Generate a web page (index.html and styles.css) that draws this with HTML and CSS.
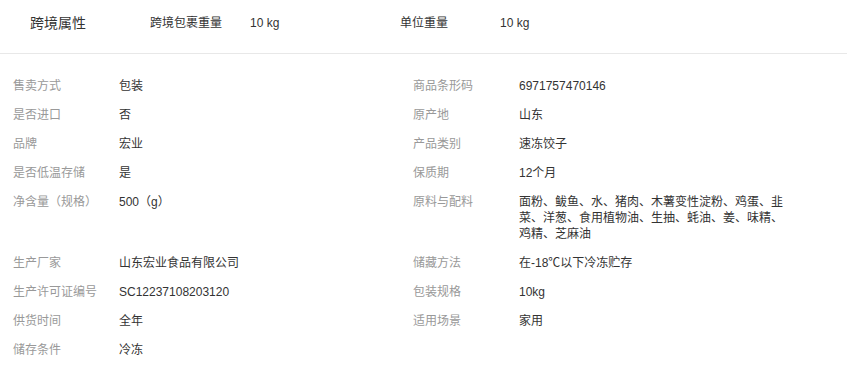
FILE: index.html
```html
<!DOCTYPE html>
<html lang="zh-CN">
<head>
<meta charset="utf-8">
<link rel="stylesheet" href="styles.css">
</head>
<body>
<div class="header">
  <div class="header-title">跨境属性</div>
  <div class="header-item"><span class="h-label">跨境包裹重量</span><span class="h-value">10 kg</span></div>
  <div class="header-item"><span class="h-label">单位重量</span><span class="h-value">10 kg</span></div>
</div>
<div class="attrs">
  <div class="attr"><span class="label">售卖方式</span><span class="value">包装</span></div>
  <div class="attr"><span class="label">商品条形码</span><span class="value">6971757470146</span></div>
  <div class="attr"><span class="label">是否进口</span><span class="value">否</span></div>
  <div class="attr"><span class="label">原产地</span><span class="value">山东</span></div>
  <div class="attr"><span class="label">品牌</span><span class="value">宏业</span></div>
  <div class="attr"><span class="label">产品类别</span><span class="value">速冻饺子</span></div>
  <div class="attr"><span class="label">是否低温存储</span><span class="value">是</span></div>
  <div class="attr"><span class="label">保质期</span><span class="value">12个月</span></div>
  <div class="attr"><span class="label">净含量（规格）</span><span class="value">500（g）</span></div>
  <div class="attr"><span class="label">原料与配料</span><span class="value">面粉、鲅鱼、水、猪肉、木薯变性淀粉、鸡蛋、韭菜、洋葱、食用植物油、生抽、蚝油、姜、味精、鸡精、芝麻油</span></div>
  <div class="attr"><span class="label">生产厂家</span><span class="value">山东宏业食品有限公司</span></div>
  <div class="attr"><span class="label">储藏方法</span><span class="value">在-18℃以下冷冻贮存</span></div>
  <div class="attr"><span class="label">生产许可证编号</span><span class="value">SC12237108203120</span></div>
  <div class="attr"><span class="label">包装规格</span><span class="value">10kg</span></div>
  <div class="attr"><span class="label">供货时间</span><span class="value">全年</span></div>
  <div class="attr"><span class="label">适用场景</span><span class="value">家用</span></div>
  <div class="attr"><span class="label">储存条件</span><span class="value">冷冻</span></div>
</div>
</body>
</html>
```
FILE: styles.css
```css
* { box-sizing: border-box; }
body {
  margin: 0;
  background: #fff;
  font-family: "Liberation Sans", "Noto Sans CJK SC", Arial, sans-serif;
  font-size: 12px;
  color: #333;
}
.header {
  display: flex;
  align-items: center;
  padding: 15px 0 22px 30px;
  line-height: 16px;
  border-bottom: 1px solid #e8e8e8;
}
.header-title {
  width: 120px;
  font-size: 14px;
  color: #333;
}
.header-item {
  display: flex;
  width: 250px;
}
.h-label { width: 100px; }
.attrs {
  display: grid;
  grid-template-columns: 400px 400px;
  row-gap: 13px;
  padding: 24px 0 0 13px;
  line-height: 16px;
}
.attr { display: flex; }
.label {
  width: 106px;
  flex: none;
  color: #999;
}
.value {
  width: 270px;
  color: #333;
}
```
